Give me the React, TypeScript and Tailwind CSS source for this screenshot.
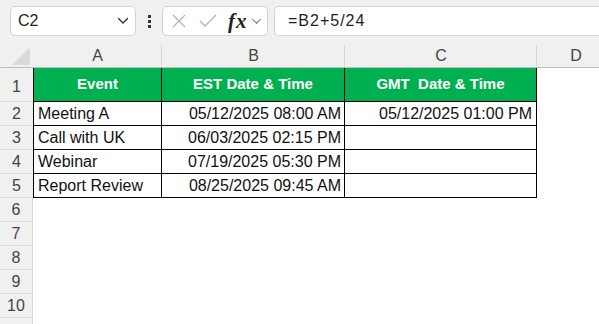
import React from 'react';

const font = { fontFamily: '"Liberation Sans", Arial, sans-serif' };

const rows = [
    { event: 'Meeting A', est: '05/12/2025 08:00 AM', gmt: '05/12/2025 01:00 PM' },
    { event: 'Call with UK', est: '06/03/2025 02:15 PM', gmt: '' },
    { event: 'Webinar', est: '07/19/2025 05:30 PM', gmt: '' },
    { event: 'Report Review', est: '08/25/2025 09:45 AM', gmt: '' },
];

const Chevron = ({ className }: { className?: string }) => (
    <svg className={className} viewBox="0 0 12 8" fill="none" stroke="currentColor" strokeWidth={1.4}>
        <path d="M1.5 1.5L6 6l4.5-4.5" strokeLinecap="round" strokeLinejoin="round" />
    </svg>
);

const Toolbar = () => (
    <div className="h-[42px] bg-[#f0f0f0] flex items-start pt-[6px] pl-[10px] gap-0">
        {/* name box */}
        <div className="w-[126px] h-[30px] bg-white border border-[#d4d4d4] rounded-[5px] flex items-center justify-between pl-[7px] pr-[6px]">
            <span className="text-[16px] text-[#1f1f1f]">C2</span>
            <Chevron className="w-[12px] h-[8px] text-[#333]" />
        </div>
        {/* kebab */}
        <div className="w-[26px] h-[30px] flex flex-col items-center justify-center gap-[2px]">
            <span className="block w-[3px] h-[3px] bg-[#333]" />
            <span className="block w-[3px] h-[3px] bg-[#333]" />
            <span className="block w-[3px] h-[3px] bg-[#333]" />
        </div>
        {/* formula buttons */}
        <div className="w-[106px] h-[30px] bg-white border border-[#d4d4d4] rounded-[5px] flex items-center pl-[8px]">
            <svg className="w-[16px] h-[16px] text-[#b4b4b4]" viewBox="0 0 16 16" fill="none" stroke="currentColor" strokeWidth={1.3}>
                <path d="M2 2l12 12M14 2L2 14" />
            </svg>
            <svg className="ml-[12px] w-[18px] h-[14px] text-[#b4b4b4]" viewBox="0 0 18 14" fill="none" stroke="currentColor" strokeWidth={1.3}>
                <path d="M1 7l5 5L17 1" />
            </svg>
            <span className="ml-[11px] text-[21px] italic font-bold text-[#222] leading-none tracking-[1px]" style={{ fontFamily: '"Liberation Serif", "Times New Roman", serif' }}>
                fx
            </span>
            <Chevron className="ml-[3px] w-[11px] h-[7px] text-[#888]" />
        </div>
        {/* formula input */}
        <div className="ml-[6px] flex-1 h-[30px] bg-white border border-[#d4d4d4] border-r-0 rounded-l-[5px] flex items-center pl-[13px]">
            <span className="text-[16px] text-[#1f1f1f] tracking-[1px]">=B2+5/24</span>
        </div>
    </div>
);

const ColHeader = () => (
    <div className="h-[26px] flex bg-[#f0f0f0] border-b border-[#bdbdbd]">
        <div className="w-[33px] relative">
            <div
                className="absolute right-[3px] bottom-[2px] w-[18px] h-[18px] bg-[#dadada]"
                style={{ clipPath: 'polygon(100% 0, 100% 100%, 0 100%)' }}
            />
        </div>
        {['A', 'B', 'C'].map((c, i) => (
            <div
                key={c}
                className={`${i === 0 ? 'w-[129px]' : i === 1 ? 'w-[183px]' : 'w-[192px]'} flex items-center justify-center text-[16px] text-[#444] pt-[2px] relative`}
            >
                {c}
                <span className="absolute right-0 top-[3px] bottom-0 w-px bg-[#d6d6d6]" />
            </div>
        ))}
        <div className="flex-1 flex items-center justify-center text-[16px] text-[#444] pt-[2px] pl-[16px]">D</div>
    </div>
);

const RowNum = ({ n, tall, last }: { n?: number; tall?: boolean; last?: boolean }) => (
    <div
        className={`w-[33px] shrink-0 bg-[#f0f0f0] flex justify-center text-[16px] text-[#444] border-b border-[#d9d9d9] ${tall ? 'items-end pb-[2px]' : 'items-center'} ${last ? 'border-r border-[#bdbdbd]' : ''}`}
    >
        {n}
    </div>
);

export default function App() {
    return (
        <div className="w-[599px] h-[324px] overflow-hidden bg-white text-[#111]" style={font}>
            <Toolbar />
            <ColHeader />

            {/* row 1 */}
            <div className="h-[34px] flex">
                <RowNum n={1} tall />
                <div className="w-[129px] bg-[#00b050] border-l border-r border-b border-black flex items-center justify-center text-white font-bold text-[15px]">
                    Event
                </div>
                <div className="w-[183px] bg-[#00b050] border-r border-b border-black flex items-center justify-center text-white font-bold text-[15px]">
                    EST Date &amp; Time
                </div>
                <div className="w-[192px] bg-[#00b050] border-r border-b border-black flex items-center justify-center text-white font-bold text-[15px] whitespace-pre">
                    GMT  Date &amp; Time
                </div>
                <div className="flex-1" />
            </div>

            {rows.map((r, i) => (
                <div key={i} className="h-[24px] flex">
                    <RowNum n={i + 2} />
                    <div className="w-[129px] border-l border-r border-b border-black flex items-center pl-[4px] text-[16px] whitespace-nowrap">
                        {r.event}
                    </div>
                    <div className="w-[183px] border-r border-b border-black flex items-center justify-end pr-[3px] text-[16px] whitespace-nowrap">
                        {r.est}
                    </div>
                    <div className="w-[192px] border-r border-b border-black flex items-center justify-end pr-[4px] text-[16px] whitespace-nowrap">
                        {r.gmt}
                    </div>
                    <div className="flex-1" />
                </div>
            ))}

            {[6, 7, 8, 9, 10].map((n) => (
                <div key={n} className="h-[24px] flex">
                    <RowNum n={n} last />
                    <div className="flex-1" />
                </div>
            ))}
            <div className="h-[24px] flex">
                <RowNum last />
                <div className="flex-1" />
            </div>
        </div>
    );
}
